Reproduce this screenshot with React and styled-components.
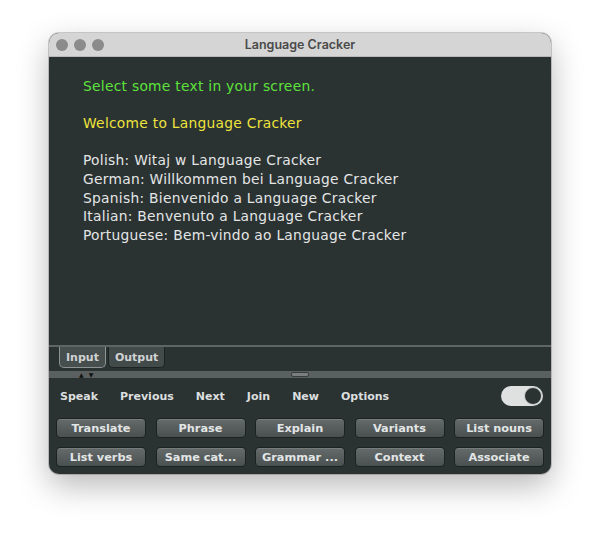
import React from "react";
import styled, { createGlobalStyle } from "styled-components";

const Global = createGlobalStyle`
  html, body { margin: 0; padding: 0; background: #ffffff; }
  body { width: 600px; height: 540px; overflow: hidden; }
`;

const Page = styled.div`
  padding: 33px 0 0 49px;
`;

const Window = styled.div`
  width: 502px;
  height: 441px;
  display: flex;
  flex-direction: column;
  border-radius: 10px;
  overflow: hidden;
  background: #2a3232;
  box-shadow: 0 0 0 1px rgba(0, 0, 0, 0.18), 0 12px 32px rgba(0, 0, 0, 0.28);
`;

const TitleBar = styled.div`
  height: 24px;
  flex: none;
  display: flex;
  align-items: center;
  position: relative;
  background: #d5d5d5;
  border-bottom: 1px solid #b9b9b9;
  box-sizing: border-box;
`;

const Lights = styled.div`
  display: flex;
  gap: 6px;
  padding-left: 7px;
`;

const Light = styled.span`
  width: 12px;
  height: 12px;
  border-radius: 50%;
  background: #8b8b8b;
`;

const Title = styled.div`
  position: absolute;
  left: 0;
  right: 0;
  text-align: center;
  font-family: Inter, "Liberation Sans", sans-serif;
  font-weight: 600;
  font-size: 12.5px;
  color: #4a4a4a;
`;

const Editor = styled.div`
  flex: 1;
  padding: 20px 0 0 34px;
  font-family: "DejaVu Sans", Verdana, sans-serif;
  font-size: 13.8px;
  letter-spacing: 0.28px;
  line-height: 18.6px;
  color: #e4e6e6;
`;

const Line = styled.div`
  color: ${(p) => p.$color || "#e4e6e6"};
  min-height: 18.6px;
  white-space: pre;
`;

const TabsRow = styled.div`
  height: 24px;
  flex: none;
  border-top: 2px solid #5f6565;
  display: flex;
  align-items: flex-start;
  padding-left: 10px;
  gap: 2px;
  box-sizing: content-box;
`;

const Tab = styled.div`
  height: 21px;
  box-sizing: border-box;
  padding: 0 6px;
  display: flex;
  align-items: center;
  border: 1px solid ${(p) => (p.$active ? "#8d9292" : "#1d2323")};
  border-top: none;
  border-radius: 0 0 5px 5px;
  background: ${(p) => (p.$active ? "#474e4e" : "#434a4a")};
  font-family: "DejaVu Sans", Verdana, sans-serif;
  font-weight: 700;
  font-size: 11px;
  color: #cfd3d3;
`;

const Splitter = styled.div`
  height: 7px;
  flex: none;
  background: #5a5f5f;
  position: relative;
  display: flex;
  align-items: center;
  justify-content: center;
`;

const Arrows = styled.div`
  position: absolute;
  left: 30px;
  top: 1px;
  display: flex;
  gap: 5px;
  font-size: 6px;
  line-height: 6px;
  color: #111;
  font-family: "DejaVu Sans", sans-serif;
`;

const Grip = styled.div`
  width: 16px;
  height: 3px;
  border: 1px solid #383c3c;
  border-radius: 2px;
  background: #7a7f7f;
`;

const Toolbar = styled.div`
  height: 36px;
  flex: none;
  display: flex;
  align-items: center;
  padding: 0 8px 0 11px;
  gap: 22px;
`;

const ToolItem = styled.div`
  font-family: "DejaVu Sans", Verdana, sans-serif;
  font-weight: 700;
  font-size: 11px;
  color: #dcdfdf;
`;

const Spacer = styled.div`
  flex: 1;
`;

const Toggle = styled.div`
  width: 42px;
  height: 20px;
  border-radius: 10px;
  background: #dfe0e0;
  display: flex;
  align-items: center;
  justify-content: flex-end;
  padding: 0 1px;
  box-sizing: border-box;
`;

const Knob = styled.div`
  width: 18px;
  height: 18px;
  border-radius: 50%;
  background: #2a3232;
  box-sizing: border-box;
  border: 1px solid #cfd2d2;
`;

const Grid = styled.div`
  flex: none;
  display: grid;
  grid-template-columns: repeat(5, 1fr);
  column-gap: 9.5px;
  row-gap: 9px;
  padding: 4px 7px 7px 7px;
`;

const Button = styled.div`
  height: 20px;
  box-sizing: border-box;
  border: 1px solid #1c2121;
  border-radius: 4px;
  background: linear-gradient(#656b6b, #4a5050);
  box-shadow: inset 0 1px 0 rgba(255, 255, 255, 0.12);
  display: flex;
  align-items: center;
  justify-content: center;
  font-family: "DejaVu Sans", Verdana, sans-serif;
  font-weight: 700;
  font-size: 11.3px;
  color: #e2e5e5;
  white-space: nowrap;
`;

const buttons = [
  "Translate", "Phrase", "Explain", "Variants", "List nouns",
  "List verbs", "Same cat...", "Grammar ...", "Context", "Associate",
];

export default function App() {
  return (
    <Page>
      <Global />
      <Window>
        <TitleBar>
          <Lights>
            <Light />
            <Light />
            <Light />
          </Lights>
          <Title>Language Cracker</Title>
        </TitleBar>
        <Editor>
          <Line $color="#5ee23b">Select some text in your screen.</Line>
          <Line />
          <Line $color="#efe43c">Welcome to Language Cracker</Line>
          <Line />
          <Line>Polish: Witaj w Language Cracker</Line>
          <Line>German: Willkommen bei Language Cracker</Line>
          <Line>Spanish: Bienvenido a Language Cracker</Line>
          <Line>Italian: Benvenuto a Language Cracker</Line>
          <Line>Portuguese: Bem-vindo ao Language Cracker</Line>
        </Editor>
        <TabsRow>
          <Tab $active>Input</Tab>
          <Tab>Output</Tab>
        </TabsRow>
        <Splitter>
          <Arrows>
            <span>▲</span>
            <span>▼</span>
          </Arrows>
          <Grip />
        </Splitter>
        <Toolbar>
          <ToolItem>Speak</ToolItem>
          <ToolItem>Previous</ToolItem>
          <ToolItem>Next</ToolItem>
          <ToolItem>Join</ToolItem>
          <ToolItem>New</ToolItem>
          <ToolItem>Options</ToolItem>
          <Spacer />
          <Toggle>
            <Knob />
          </Toggle>
        </Toolbar>
        <Grid>
          {buttons.map((b) => (
            <Button key={b}>{b}</Button>
          ))}
        </Grid>
      </Window>
    </Page>
  );
}
